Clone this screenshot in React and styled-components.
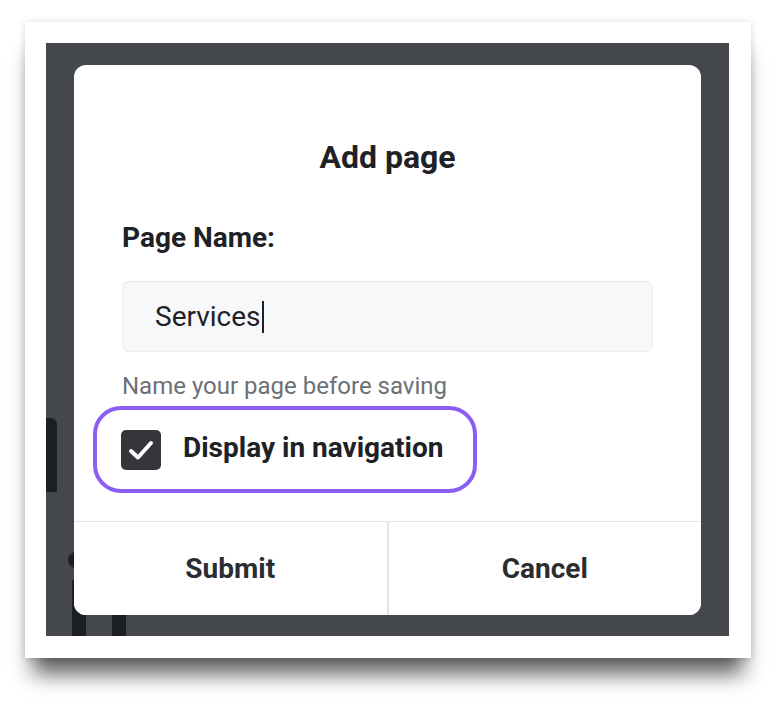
import React from "react";
import styled, { createGlobalStyle } from "styled-components";

const Global = createGlobalStyle`
  html, body { margin: 0; padding: 0; background: #ffffff; }
  body { font-family: Roboto, "Liberation Sans", Arial, sans-serif; }
  * { box-sizing: border-box; }
`;

const Page = styled.div`
  width: 776px;
  height: 712px;
  padding: 22px 0 0 25px;
  background: #ffffff;
  overflow: hidden;
`;

const Frame = styled.div`
  width: 726px;
  height: 636px;
  padding: 21px 22px 22px 21px;
  background: #ffffff;
  box-shadow: 0 24px 20px -8px rgba(0, 0, 0, 0.62), 0 1px 8px rgba(0, 0, 0, 0.16);
`;

const Backdrop = styled.div`
  position: relative;
  width: 683px;
  height: 593px;
  padding: 22px 0 0 28px;
  background: #44484d;
  overflow: hidden;
`;

const BackdropArt = styled.svg`
  position: absolute;
  left: 0;
  top: 0;
  width: 683px;
  height: 593px;
`;

const Modal = styled.div`
  position: relative;
  width: 627px;
  height: 550px;
  background: #ffffff;
  border-radius: 12px;
  display: flex;
  flex-direction: column;
  overflow: hidden;
`;

const Body = styled.div`
  flex: 1;
  padding: 73px 48px 0 48px;
  display: flex;
  flex-direction: column;
`;

const Title = styled.h2`
  margin: 0;
  height: 38px;
  font-size: 32px;
  line-height: 38px;
  font-weight: 700;
  text-align: center;
  color: #1e2125;
`;

const Label = styled.label`
  margin-top: 45px;
  height: 34px;
  font-size: 28px;
  line-height: 34px;
  font-weight: 700;
  color: #1e2125;
`;

const Input = styled.div`
  margin-top: 26px;
  height: 71px;
  padding: 0 32px;
  display: flex;
  align-items: center;
  background: #f7f8f9;
  border: 1px solid #eceef0;
  border-top-color: #e4e6e9;
  border-radius: 7px;
  font-size: 28px;
  color: #1e2125;
`;

const Caret = styled.span`
  display: inline-block;
  width: 2px;
  height: 32px;
  margin-left: 1px;
  background: #1e2125;
`;

const Helper = styled.div`
  margin-top: 20px;
  height: 28px;
  font-size: 24px;
  line-height: 28px;
  color: #6b7076;
`;

const CheckRow = styled.div`
  margin: 6px 0 0 -29px;
  align-self: flex-start;
  height: 87px;
  padding: 0 30px 0 24px;
  display: flex;
  align-items: center;
  gap: 22px;
  border: 4px solid #8b5cf6;
  border-radius: 28px;
`;

const Box = styled.span`
  width: 40px;
  height: 40px;
  border-radius: 5px;
  background: #35363b;
  display: flex;
  align-items: center;
  justify-content: center;
`;

const CheckText = styled.span`
  font-size: 28px;
  font-weight: 700;
  color: #1e2125;
  padding-bottom: 5px;
`;

const Footer = styled.div`
  height: 94px;
  display: flex;
  border-top: 1px solid #e3e5e8;
`;

const FooterButton = styled.button`
  flex: 1;
  border: none;
  border-left: ${(p) => (p.$divided ? "2px solid #e3e5e8" : "none")};
  background: #ffffff;
  font-family: Roboto, "Liberation Sans", Arial, sans-serif;
  font-size: 28px;
  font-weight: 700;
  color: #2a2d31;
  padding: 0;
  cursor: pointer;
`;

export default function App() {
  return (
    <>
      <Global />
      <Page>
        <Frame>
          <Backdrop>
            <BackdropArt viewBox="0 0 683 593">
              <path d="M0 375 H4 Q11 375 11 383 V449 H0 Z" fill="#1b1e22" />
              <circle cx="30" cy="517" r="8" fill="#1b1e22" />
              <rect x="26" y="537" width="14" height="56" fill="#1b1e22" />
              <rect x="66" y="560" width="14" height="33" fill="#1b1e22" />
            </BackdropArt>
            <Modal>
              <Body>
                <Title>Add page</Title>
                <Label>Page Name:</Label>
                <Input>
                  Services<Caret />
                </Input>
                <Helper>Name your page before saving</Helper>
                <CheckRow>
                  <Box>
                    <svg width="26" height="22" viewBox="0 0 26 22">
                      <path
                        d="M3 12 L10 18.5 L23 4"
                        fill="none"
                        stroke="#ffffff"
                        strokeWidth="4"
                        strokeLinecap="round"
                        strokeLinejoin="round"
                      />
                    </svg>
                  </Box>
                  <CheckText>Display in navigation</CheckText>
                </CheckRow>
              </Body>
              <Footer>
                <FooterButton>Submit</FooterButton>
                <FooterButton $divided>Cancel</FooterButton>
              </Footer>
            </Modal>
          </Backdrop>
        </Frame>
      </Page>
    </>
  );
}
